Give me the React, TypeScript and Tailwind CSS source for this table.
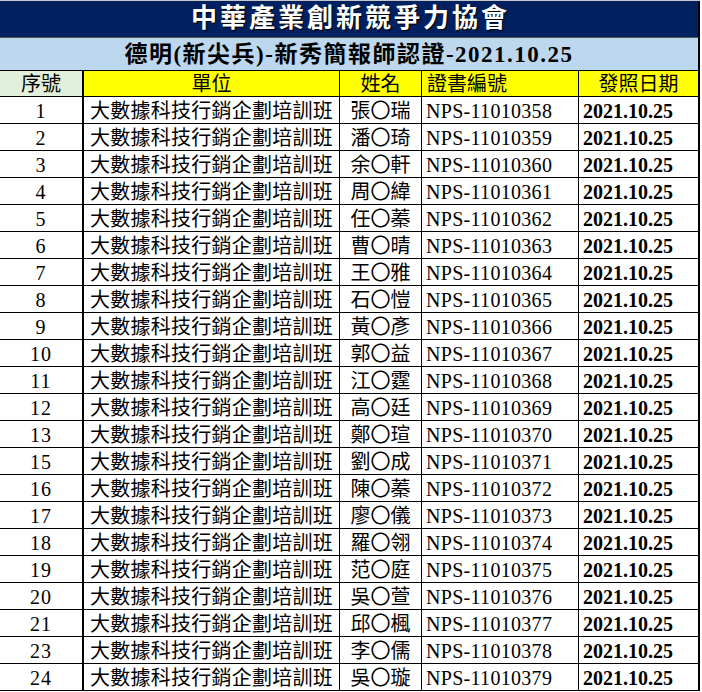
import React from 'react';

const rows = [
  ['1', '張〇瑞', '58'],
  ['2', '潘〇琦', '59'],
  ['3', '余〇軒', '60'],
  ['4', '周〇緯', '61'],
  ['5', '任〇蓁', '62'],
  ['6', '曹〇晴', '63'],
  ['7', '王〇雅', '64'],
  ['8', '石〇愷', '65'],
  ['9', '黃〇彥', '66'],
  ['10', '郭〇益', '67'],
  ['11', '江〇霆', '68'],
  ['12', '高〇廷', '69'],
  ['13', '鄭〇瑄', '70'],
  ['15', '劉〇成', '71'],
  ['16', '陳〇蓁', '72'],
  ['17', '廖〇儀', '73'],
  ['18', '羅〇翎', '74'],
  ['19', '范〇庭', '75'],
  ['20', '吳〇萱', '76'],
  ['21', '邱〇楓', '77'],
  ['23', '李〇儒', '78'],
  ['24', '吳〇璇', '79'],
];

const font = "font-['Liberation_Serif','Noto_Sans_CJK_TC',serif]";
const cols = 'grid grid-cols-[84px_256px_82px_157px_121px]';

export default function App() {
  return (
    <div className={`w-[702px] h-[692px] overflow-hidden bg-white text-black ${font}`}>
      <div className="w-[700px] border-t border-[#c8c8c8]">
        <div className="h-[36px] bg-[#002060] border-r-2 border-black flex items-center justify-center">
          <span className="text-[26px] font-bold text-white tracking-[3px] leading-none [text-shadow:1px_1px_1px_#000] pl-[3px]">
            中華產業創新競爭力協會
          </span>
        </div>
        <div className="h-[34px] bg-[#bdd7ee] border-t border-[#555] border-b border-b-black border-r-2 border-r-black flex items-center justify-center">
          <span className="text-[23px] font-bold tracking-[1.5px] leading-none">
            德明(新尖兵)-新秀簡報師認證-2021.10.25
          </span>
        </div>
        <div className={`${cols} h-[26px] border-b border-black text-[20px] leading-none`}>
          <div className="bg-[#e2efda] border-r-2 border-black flex items-center justify-center">序號</div>
          <div className="bg-[#ffff00] border-r border-black flex items-center justify-center">單位</div>
          <div className="bg-[#ffff00] border-r border-black flex items-center justify-center">姓名</div>
          <div className="bg-[#ffff00] border-r border-black flex items-center pl-[5px]">證書編號</div>
          <div className="bg-[#ffff00] border-r-2 border-black flex items-center justify-center">發照日期</div>
        </div>
        {rows.map(([no, name, cert]) => (
          <div key={no + cert} className={`${cols} h-[27px] border-b border-black text-[20px] leading-none`}>
            <div className="border-r-2 border-black flex items-center justify-center pt-[2px] tracking-[1px]">{no}</div>
            <div className="border-r border-black flex items-center justify-center pt-[1px] tracking-[0.25px]">
              大數據科技行銷企劃培訓班
            </div>
            <div className="border-r border-black flex items-center justify-center pt-[1px]">{name}</div>
            <div className="border-r border-black flex items-center pl-[4px] pt-[2px] tracking-[0.3px]">
              NPS-110103{cert}
            </div>
            <div className="border-r-2 border-black flex items-center pl-[4px] pt-[2px] font-bold">2021.10.25</div>
          </div>
        ))}
      </div>
    </div>
  );
}
